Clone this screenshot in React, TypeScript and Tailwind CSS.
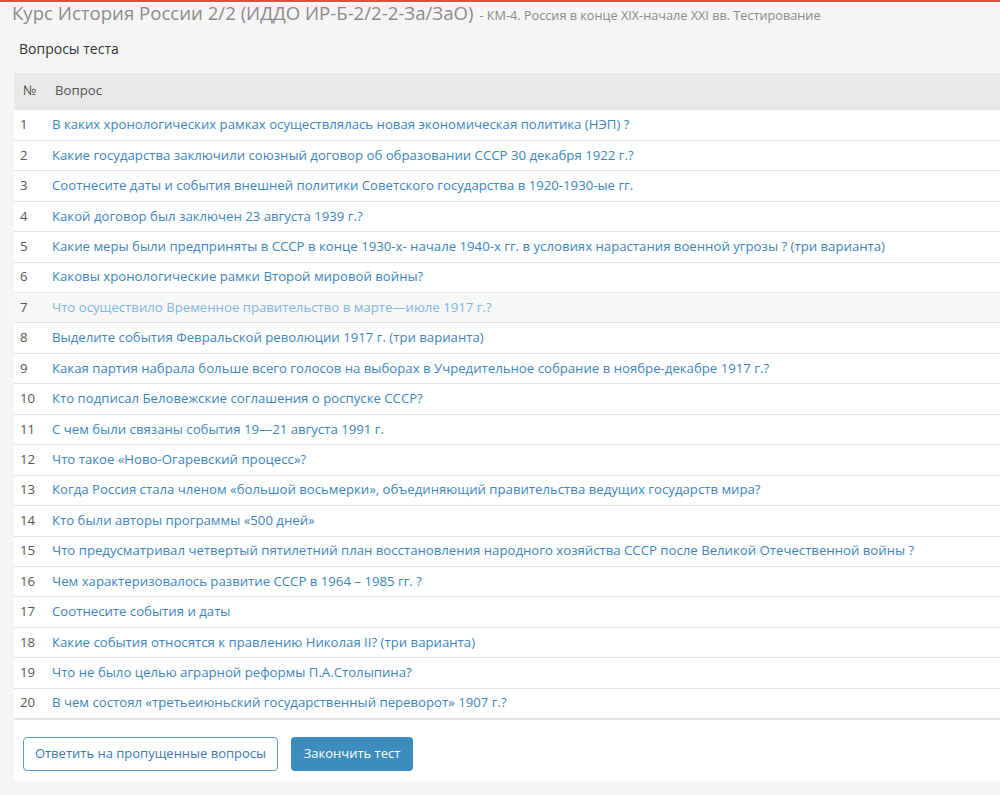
const questions: string[] = [
  'В каких хронологических рамках осуществлялась новая экономическая политика (НЭП) ?',
  'Какие государства заключили союзный договор об образовании СССР 30 декабря 1922 г.?',
  'Соотнесите даты и события внешней политики Советского государства в 1920-1930-ые гг.',
  'Какой договор был заключен 23 августа 1939 г.?',
  'Какие меры были предприняты в СССР в конце 1930-х- начале 1940-х гг. в условиях нарастания военной угрозы ? (три варианта)',
  'Каковы хронологические рамки Второй мировой войны?',
  'Что осуществило Временное правительство в марте—июле 1917 г.?',
  'Выделите события Февральской революции 1917 г. (три варианта)',
  'Какая партия набрала больше всего голосов на выборах в Учредительное собрание в ноябре-декабре 1917 г.?',
  'Кто подписал Беловежские соглашения о роспуске СССР?',
  'С чем были связаны события 19—21 августа 1991 г.',
  'Что такое «Ново-Огаревский процесс»?',
  'Когда Россия стала членом «большой восьмерки», объединяющий правительства ведущих государств мира?',
  'Кто были авторы программы «500 дней»',
  'Что предусматривал четвертый пятилетний план восстановления народного хозяйства СССР после Великой Отечественной войны ?',
  'Чем характеризовалось развитие СССР в 1964 – 1985 гг. ?',
  'Соотнесите события и даты',
  'Какие события относятся к правлению Николая II? (три варианта)',
  'Что не было целью аграрной реформы П.А.Столыпина?',
  'В чем состоял «третьеиюньский государственный переворот» 1907 г.?',
];

export default function App() {
  return (
    <div
      className="min-h-[795px] w-[1000px] overflow-hidden border-t-2 border-[#e74c3c] bg-[#f5f5f5] text-[13.2px] text-[#555]"
      style={{ fontFamily: '"Open Sans", "Liberation Sans", sans-serif' }}
    >
      <div className="-mt-[3px] mb-[3px] flex items-baseline whitespace-nowrap pl-3">
        <span className="text-[18.6px] text-[#8a8a8a]">Курс История России 2/2 (ИДДО ИР-Б-2/2-2-За/ЗаО)</span>
        <span className="ml-[6px] text-[12.7px] text-[#8a8a8a]">- КМ-4. Россия в конце XIX-начале XXI вв. Тестирование</span>
      </div>

      <div className="ml-[14px]">
        <div className="h-[43px] pl-[5px] pt-[8px] text-[14px] text-[#333]">Вопросы теста</div>
        <div className="bg-white pb-[10px]">
          <table className="w-full border-collapse">
            <thead>
              <tr className="h-[37px] bg-[#e8e8e8] text-left text-[#555]">
                <th className="w-[38px] pl-[9px] font-normal">№</th>
                <th className="pl-[3px] font-normal">Вопрос</th>
              </tr>
            </thead>
            <tbody>
              {questions.map((q, i) => (
                <tr
                  key={i}
                  className={
                    (i === 19 ? 'border-b-2 ' : 'border-b ') +
                    'h-[30.45px] border-[#e0e6e6] ' +
                    (i === 6 ? 'bg-[#f7f7f7]' : 'bg-white')
                  }
                >
                  <td className="pl-[6px] text-[#555]">{i + 1}</td>
                  <td className={i === 6 ? 'text-[#82b4dc]' : 'text-[#3c86c0]'}>{q}</td>
                </tr>
              ))}
            </tbody>
          </table>
          <div className="mt-[17px] flex gap-[13px] pl-[9px]">
            <button className="h-[34px] w-[255px] rounded-[4px] border border-[#5a9fd0] bg-white text-[13px] text-[#3a7ab0]">
              Ответить на пропущенные вопросы
            </button>
            <button className="h-[34px] w-[122px] rounded-[4px] bg-[#3c8dbc] text-[13px] text-white">
              Закончить тест
            </button>
          </div>
        </div>
      </div>
    </div>
  );
}
